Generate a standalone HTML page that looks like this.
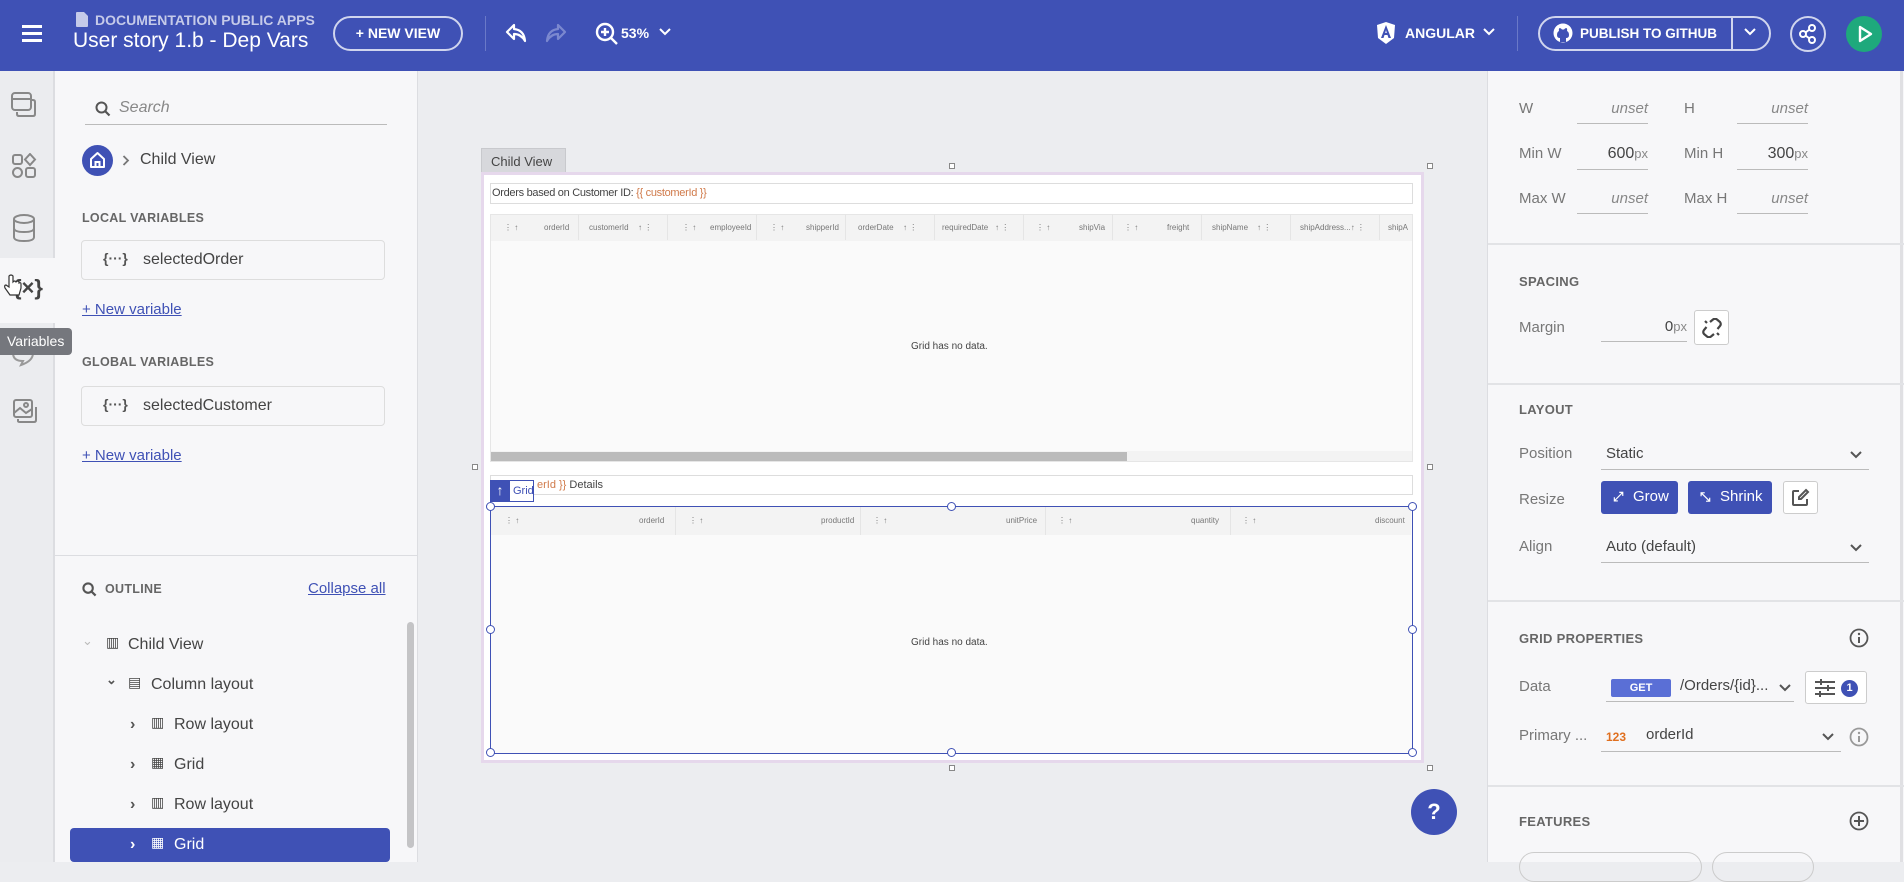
<!DOCTYPE html>
<html><head><meta charset="utf-8">
<style>
*{box-sizing:border-box;margin:0;padding:0}
body{width:1904px;height:862px;overflow:hidden;position:relative;font-family:"Liberation Sans",sans-serif;background:#ecedf0;color:#333}
.a{position:absolute}
.hdr{left:0;top:0;width:1904px;height:71px;background:#3f51b5;color:#fff}
.rail{left:0;top:71px;width:55px;height:791px;background:#ebecef;border-right:2px solid #dcdde1}
.lp{left:55px;top:71px;width:363px;height:791px;background:#f7f7f9;border-right:1px solid #dcdde1}
.rp{left:1487px;top:71px;width:417px;height:791px;background:#f7f7f9;border-left:1px solid #dcdde1}
.sec{font-size:13px;font-weight:bold;color:#666;letter-spacing:.3px}
.lbl{font-size:15px;color:#777}
.ul{border-bottom:1px solid #bbb}
.varbox{position:absolute;left:81px;width:304px;height:40px;border:1px solid #ddd;border-radius:4px;background:#f7f7f9;font-size:16px;color:#444;padding:10px 0 0 61px}
.link{font-size:15px;color:#3f51b5;text-decoration:underline}
.tree{position:absolute;font-size:16px;color:#444}
.cv{font-family:"Liberation Sans",sans-serif}
.gh{position:absolute;font-size:8px;color:#777;top:9px}
.hdl{position:absolute;width:9px;height:9px;border:1.3px solid #3f51b5;border-radius:50%;background:#fff}
.sq{position:absolute;width:6px;height:6px;border:1px solid #888;background:#fff}
.div{position:absolute;left:0;width:417px;border-top:2px solid #e2e3e6}
</style></head><body>
<div class="a hdr">
 <div class="a" style="left:22px;top:25px;width:20px;height:3px;background:#fff;box-shadow:0 7px 0 #fff,0 14px 0 #fff"></div>
 <svg class="a" style="left:76px;top:12px" width="12" height="15" viewBox="0 0 12 15"><path d="M0 1Q0 0 1 0H8L12 4V14Q12 15 11 15H1Q0 15 0 14Z" fill="#c5cae9"/></svg>
 <div class="a" style="left:95px;top:12px;font-size:14px;font-weight:bold;color:#c5cae9">DOCUMENTATION PUBLIC APPS</div>
 <div class="a" style="left:73px;top:29px;font-size:21px;color:#fff">User story 1.b - Dep Vars</div>
 <div class="a" style="left:333px;top:16px;width:130px;height:35px;border:2px solid #d0d5ee;border-radius:18px;font-size:14px;font-weight:bold;text-align:center;line-height:31px">+ NEW VIEW</div>
 <div class="a" style="left:485px;top:16px;width:1px;height:35px;background:#6a79c8"></div>
 <svg class="a" style="left:505px;top:22px" width="22" height="22" viewBox="0 0 22 22"><path d="M9 3L2 10L9 17V12Q16 12 20 19Q19 8 9 7Z" fill="none" stroke="#fff" stroke-width="2.2" stroke-linejoin="round"/></svg>
 <svg class="a" style="left:545px;top:22px" width="22" height="22" viewBox="0 0 22 22"><path d="M13 3L20 10L13 17V12Q6 12 2 19Q3 8 13 7Z" fill="none" stroke="#7b88cf" stroke-width="2.2" stroke-linejoin="round"/></svg>
 <svg class="a" style="left:595px;top:22px" width="24" height="24" viewBox="0 0 24 24"><circle cx="10" cy="10" r="8" fill="none" stroke="#fff" stroke-width="2.4"/><path d="M16 16L22 22M10 6V14M6 10H14" stroke="#fff" stroke-width="2.4"/></svg>
 <div class="a" style="left:621px;top:25px;font-size:14px;font-weight:bold">53%</div>
 <svg class="a" style="left:659px;top:28px" width="12" height="8"><path d="M1 1L6 6L11 1" fill="none" stroke="#fff" stroke-width="2"/></svg>
 <svg class="a" style="left:1377px;top:22px" width="18" height="22" viewBox="0 0 18 22"><path d="M9 0L18 3L17 16L9 22L1 16L0 3Z" fill="#fff"/><path d="M9 3L4 16H6.5L7.5 13H10.5L11.5 16H14ZM8.2 11L9 8L9.8 11Z" fill="#3f51b5"/></svg>
 <div class="a" style="left:1405px;top:25px;font-size:14px;font-weight:bold">ANGULAR</div>
 <svg class="a" style="left:1483px;top:28px" width="12" height="8"><path d="M1 1L6 6L11 1" fill="none" stroke="#fff" stroke-width="2"/></svg>
 <div class="a" style="left:1517px;top:16px;width:1px;height:35px;background:#6a79c8"></div>
 <div class="a" style="left:1538px;top:16px;width:233px;height:35px;border:2px solid #d0d5ee;border-radius:18px"></div>
 <div class="a" style="left:1731px;top:18px;width:2px;height:31px;background:#d0d5ee"></div>
 <svg class="a" style="left:1553px;top:23px" width="20" height="20" viewBox="0 0 20 20"><circle cx="10" cy="10" r="9.5" fill="#fff"/><path d="M7 19V15Q4 15 4 12Q4 9 6 8Q5.5 6 6.5 5Q8 5 9 6.5H11Q12 5 13.5 5Q14.5 6 14 8Q16 9 16 12Q16 15 13 15V19Z" fill="#3f51b5"/></svg>
 <div class="a" style="left:1580px;top:26px;font-size:13.5px;font-weight:bold">PUBLISH TO GITHUB</div>
 <svg class="a" style="left:1744px;top:28px" width="12" height="8"><path d="M1 1L6 6L11 1" fill="none" stroke="#fff" stroke-width="2"/></svg>
 <div class="a" style="left:1790px;top:16px;width:36px;height:36px;border:2px solid #d0d5ee;border-radius:50%"></div>
 <svg class="a" style="left:1798px;top:24px" width="20" height="20" viewBox="0 0 20 20"><circle cx="5" cy="10" r="3" fill="none" stroke="#fff" stroke-width="2"/><circle cx="14" cy="4" r="3" fill="none" stroke="#fff" stroke-width="2"/><circle cx="14" cy="16" r="3" fill="none" stroke="#fff" stroke-width="2"/><path d="M7.5 8.5L11.5 5.5M7.5 11.5L11.5 14.5" stroke="#fff" stroke-width="2"/></svg>
 <div class="a" style="left:1846px;top:16px;width:36px;height:36px;background:#1ea97c;border-radius:50%"></div>
 <svg class="a" style="left:1857px;top:25px" width="16" height="18"><path d="M3 2L14 9L3 16Z" fill="none" stroke="#fff" stroke-width="2.4" stroke-linejoin="round"/></svg>
</div>
<div class="a rail">
 <div class="a" style="left:0;top:187px;width:55px;height:65px;background:#f7f7f9"></div>
 <svg class="a" style="left:10px;top:20px" width="28" height="28" viewBox="0 0 28 28" fill="none" stroke="#888" stroke-width="2"><rect x="2" y="2" width="19" height="17" rx="3"/><path d="M2 8H21"/><path d="M7 21V23Q7 25 9 25H23Q25 25 25 23V11Q25 9 23 9H21"/></svg>
 <svg class="a" style="left:11px;top:82px" width="26" height="26" viewBox="0 0 26 26" fill="none" stroke="#888" stroke-width="2"><rect x="2" y="2" width="9" height="9" rx="2"/><path d="M19 1L24 6.5L19 12L14 6.5Z"/><circle cx="6.5" cy="19.5" r="4.5"/><rect x="15" y="15" width="9" height="9" rx="2"/></svg>
 <svg class="a" style="left:12px;top:143px" width="24" height="28" viewBox="0 0 24 28" fill="none" stroke="#888" stroke-width="2"><ellipse cx="12" cy="5" rx="10" ry="4"/><path d="M2 5V23Q2 27 12 27Q22 27 22 23V5M2 14Q2 18 12 18Q22 18 22 14"/></svg>
 <div class="a" style="left:13px;top:204px;font-size:22px;font-weight:bold;color:#444">{×}</div>
 <svg class="a" style="left:3px;top:203px" width="20" height="24" viewBox="0 0 20 24"><path d="M6 2V13L3 11Q1 11 2 14L7 21H16L18 14V10Q18 8 16 9V8Q15 6 13 8Q12 6 10 8V2Q8 0 6 2Z" fill="#fff" stroke="#333" stroke-width="1.2"/></svg>
 <svg class="a" style="left:12px;top:327px" width="26" height="26" viewBox="0 0 26 26" fill="none" stroke="#888" stroke-width="2"><rect x="2" y="2" width="18" height="17" rx="2"/><path d="M2 15L8 10L14 15L20 11"/><circle cx="14" cy="7" r="2"/><path d="M6 21V23Q6 24 8 24H22Q24 24 24 22V9"/></svg>
 <svg class="a" style="left:10px;top:270px" width="26" height="26" viewBox="0 0 26 26" fill="none" stroke="#999" stroke-width="2"><path d="M13 3Q3 3 3 12Q3 20 13 20L11 24Q23 20 23 12Q23 3 13 3Z"/></svg>
</div>
<div class="a lp"></div>
<svg class="a" style="left:95px;top:101px" width="16" height="16" viewBox="0 0 16 16"><circle cx="6.5" cy="6.5" r="5" fill="none" stroke="#555" stroke-width="2"/><path d="M10 10L14.5 14.5" stroke="#555" stroke-width="2.2"/></svg>
<div class="a" style="left:119px;top:99px;font-size:16px;font-style:italic;color:#888">Search</div>
<div class="a ul" style="left:85px;top:124px;width:302px"></div>
<div class="a" style="left:82px;top:145px;width:31px;height:31px;border-radius:50%;background:#3f51b5"></div>
<svg class="a" style="left:89px;top:151px" width="17" height="18" viewBox="0 0 17 18"><path d="M2 8L8.5 2L15 8V16H2Z" fill="none" stroke="#fff" stroke-width="2" stroke-linejoin="round"/><path d="M6.5 16V11H10.5V16" stroke="#fff" stroke-width="2" fill="none"/></svg>
<svg class="a" style="left:122px;top:155px" width="8" height="11"><path d="M1.5 1L6 5.5L1.5 10" fill="none" stroke="#777" stroke-width="1.8"/></svg>
<div class="a" style="left:140px;top:151px;font-size:16px;color:#444">Child View</div>
<div class="a sec" style="left:82px;top:211px;font-size:12.5px">LOCAL VARIABLES</div>
<div class="varbox" style="top:240px">selectedOrder</div>
<div class="a" style="left:103px;top:250px;font-size:14px;font-weight:bold;color:#555">{···}</div>
<div class="a link" style="left:82px;top:301px">+ New variable</div>
<div class="a sec" style="left:82px;top:355px;font-size:12.5px">GLOBAL VARIABLES</div>
<div class="varbox" style="top:386px">selectedCustomer</div>
<div class="a" style="left:103px;top:396px;font-size:14px;font-weight:bold;color:#555">{···}</div>
<div class="a link" style="left:82px;top:447px">+ New variable</div>
<div class="a" style="left:55px;top:555px;width:362px;border-top:1px solid #dcdde1"></div>
<svg class="a" style="left:82px;top:582px" width="15" height="15" viewBox="0 0 16 16"><circle cx="6.5" cy="6.5" r="5" fill="none" stroke="#555" stroke-width="2.2"/><path d="M10 10L14.5 14.5" stroke="#555" stroke-width="2.4"/></svg>
<div class="a sec" style="left:105px;top:582px;font-size:12.5px">OUTLINE</div>
<div class="a link" style="left:308px;top:580px;font-size:15px">Collapse all</div>
<div class="a" style="left:407px;top:622px;width:7px;height:226px;background:#c4c4c6;border-radius:4px"></div>
<div class="a" style="left:70px;top:828px;width:320px;height:34px;background:#3f51b5;border-radius:4px"></div>
<div class="tree" style="left:82px;top:633px;color:#bbb;font-size:13px">⌄</div>
<div class="tree" style="left:106px;top:634px;font-size:14px;letter-spacing:-1px">▥</div><div class="tree" style="left:128px;top:636px">Child View</div>
<div class="tree" style="left:106px;top:672px;font-size:13px;font-weight:bold;color:#555">⌄</div>
<div class="tree" style="left:128px;top:674px;font-size:14px">▤</div><div class="tree" style="left:151px;top:676px">Column layout</div>
<div class="tree" style="left:130px;top:716px;font-weight:bold;color:#555">›</div><div class="tree" style="left:151px;top:714px;font-size:14px">▥</div><div class="tree" style="left:174px;top:716px">Row layout</div>
<div class="tree" style="left:130px;top:756px;font-weight:bold;color:#555">›</div><div class="tree" style="left:151px;top:754px;font-size:14px">▦</div><div class="tree" style="left:174px;top:756px">Grid</div>
<div class="tree" style="left:130px;top:796px;font-weight:bold;color:#555">›</div><div class="tree" style="left:151px;top:794px;font-size:14px">▥</div><div class="tree" style="left:174px;top:796px">Row layout</div>
<div class="tree" style="left:130px;top:836px;font-weight:bold;color:#fff">›</div><div class="tree" style="left:151px;top:834px;font-size:14px;color:#fff">▦</div><div class="tree" style="left:174px;top:836px;color:#fff">Grid</div>
<div class="a" style="left:0;top:328px;height:27px;background:#75777d;border-radius:0 4px 4px 0;color:#fff;font-size:14px;padding:5px 8px 0 7px;white-space:nowrap">Variables</div>
<div class="a" style="left:481px;top:148px;width:85px;height:25px;background:#d7d8dc;border:1px solid #c8c9cd;font-size:13px;color:#444;padding:5px 0 0 9px">Child View</div>
<div class="a" style="left:481px;top:172px;width:943px;height:591px;border:3px solid #e6d8ec;background:#fff"></div>
<div class="sq" style="left:949px;top:163px"></div><div class="sq" style="left:1427px;top:163px"></div>
<div class="sq" style="left:472px;top:464px"></div><div class="sq" style="left:1427px;top:464px"></div>
<div class="sq" style="left:949px;top:765px"></div><div class="sq" style="left:1427px;top:765px"></div>
<div class="a cv" style="left:490px;top:183px;width:923px;height:21px;border:1px solid #ddd;font-size:11px;color:#444;padding:3px 0 0 1px;letter-spacing:-.3px">Orders based on Customer ID: <span style="color:#d07a4a">{{ customerId }}</span></div>
<div class="a" style="left:490px;top:214px;width:923px;height:248px;background:#fafafa;border:1px solid #e6e6e6;overflow:hidden">
 <div class="a" style="left:0;top:0;width:923px;height:26px;background:#f3f3f3"></div>
 <div class="a" style="left:420px;top:126px;font-size:10px;color:#444">Grid has no data.</div>
 <div class="a" style="left:0;top:236px;width:923px;height:11px;background:#f3f3f3"></div>
 <div class="a" style="left:0;top:237px;width:636px;height:10px;background:#bbb"></div>
</div>
<div class="a" style="left:490px;top:214px;width:923px;height:26px;overflow:hidden">
 <div class="gh" style="left:14px">⋮ ↑</div><div class="gh" style="left:54px">orderId</div>
 <div class="gh" style="left:99px">customerId</div><div class="gh" style="left:148px">↑ ⋮</div>
 <div class="gh" style="left:192px">⋮ ↑</div><div class="gh" style="left:220px">employeeId</div>
 <div class="gh" style="left:280px">⋮ ↑</div><div class="gh" style="left:316px">shipperId</div>
 <div class="gh" style="left:368px">orderDate</div><div class="gh" style="left:413px">↑ ⋮</div>
 <div class="gh" style="left:452px">requiredDate</div><div class="gh" style="left:505px">↑ ⋮</div>
 <div class="gh" style="left:546px">⋮ ↑</div><div class="gh" style="left:589px">shipVia</div>
 <div class="gh" style="left:634px">⋮ ↑</div><div class="gh" style="left:677px">freight</div>
 <div class="gh" style="left:722px">shipName</div><div class="gh" style="left:767px">↑ ⋮</div>
 <div class="gh" style="left:810px">shipAddress...↑ ⋮</div>
 <div class="gh" style="left:898px">shipA</div>
 <div class="a" style="left:88px;top:0;width:1px;height:26px;background:#e5e5e5;box-shadow:89px 0 #e5e5e5,178px 0 #e5e5e5,267px 0 #e5e5e5,356px 0 #e5e5e5,445px 0 #e5e5e5,534px 0 #e5e5e5,623px 0 #e5e5e5,712px 0 #e5e5e5,801px 0 #e5e5e5"></div>
</div>
<div class="a cv" style="left:490px;top:475px;width:923px;height:20px;border:1px solid #ddd;font-size:11px;color:#444;padding:3px 0 0 46px"><span style="color:#d07a4a">erId }}</span> Details</div>
<div class="a" style="left:490px;top:506px;width:923px;height:248px;background:#fafafa;border:1.5px solid #3f51b5">
 <div class="a" style="left:0;top:0;width:920px;height:28px;background:#f3f3f3"></div>
 <div class="gh" style="left:14px;top:9px">⋮ ↑</div><div class="gh" style="left:148px;top:9px">orderId</div>
 <div class="gh" style="left:198px;top:9px">⋮ ↑</div><div class="gh" style="left:330px;top:9px">productId</div>
 <div class="gh" style="left:382px;top:9px">⋮ ↑</div><div class="gh" style="left:515px;top:9px">unitPrice</div>
 <div class="gh" style="left:567px;top:9px">⋮ ↑</div><div class="gh" style="left:700px;top:9px">quantity</div>
 <div class="gh" style="left:751px;top:9px">⋮ ↑</div><div class="gh" style="left:884px;top:9px">discount</div>
 <div class="a" style="left:184px;top:0;width:1px;height:28px;background:#e5e5e5;box-shadow:185px 0 #e5e5e5,370px 0 #e5e5e5,555px 0 #e5e5e5"></div>
 <div class="a" style="left:420px;top:130px;font-size:10px;color:#444">Grid has no data.</div>
</div>
<div class="hdl" style="left:486px;top:502px"></div><div class="hdl" style="left:947px;top:502px"></div><div class="hdl" style="left:1408px;top:502px"></div>
<div class="hdl" style="left:486px;top:625px"></div><div class="hdl" style="left:1408px;top:625px"></div>
<div class="hdl" style="left:486px;top:748px"></div><div class="hdl" style="left:947px;top:748px"></div><div class="hdl" style="left:1408px;top:748px"></div>
<div class="a" style="left:490px;top:480px;width:44px;height:22px;border:1px solid #3f51b5;background:#fff;font-size:11px;color:#3f51b5;padding:4px 0 0 22px;white-space:nowrap">Grid</div>
<div class="a" style="left:490px;top:480px;width:20px;height:22px;background:#3f51b5;color:#fff;font-size:14px;font-weight:bold;text-align:center;line-height:20px">↑</div>
<div class="a" style="left:1411px;top:789px;width:46px;height:46px;border-radius:50%;background:#3f51b5;color:#fff;font-size:22px;font-weight:bold;text-align:center;line-height:46px">?</div>
<div class="a rp">
 <div class="a" style="left:412px;top:0;width:3px;height:791px;background:#e0e0e3"></div>
 <div class="a lbl" style="left:31px;top:29px">W</div><div class="a ul" style="left:89px;top:29px;width:71px;text-align:right;font-size:15px;font-style:italic;color:#888;padding-bottom:6px">unset</div>
 <div class="a lbl" style="left:196px;top:29px">H</div><div class="a ul" style="left:249px;top:29px;width:71px;text-align:right;font-size:15px;font-style:italic;color:#888;padding-bottom:6px">unset</div>
 <div class="a lbl" style="left:31px;top:74px">Min W</div><div class="a ul" style="left:89px;top:74px;width:71px;text-align:right;font-size:16px;color:#444;padding-bottom:6px">600<span style="font-size:13px;color:#888">px</span></div>
 <div class="a lbl" style="left:196px;top:74px">Min H</div><div class="a ul" style="left:249px;top:74px;width:71px;text-align:right;font-size:16px;color:#444;padding-bottom:6px">300<span style="font-size:13px;color:#888">px</span></div>
 <div class="a lbl" style="left:31px;top:119px">Max W</div><div class="a ul" style="left:89px;top:119px;width:71px;text-align:right;font-size:15px;font-style:italic;color:#888;padding-bottom:6px">unset</div>
 <div class="a lbl" style="left:196px;top:119px">Max H</div><div class="a ul" style="left:249px;top:119px;width:71px;text-align:right;font-size:15px;font-style:italic;color:#888;padding-bottom:6px">unset</div>
 <div class="div" style="top:172px"></div>
 <div class="a sec" style="left:31px;top:203px">SPACING</div>
 <div class="a lbl" style="left:31px;top:248px">Margin</div>
 <div class="a ul" style="left:113px;top:247px;width:86px;text-align:right;font-size:15px;color:#444;padding-bottom:6px">0<span style="font-size:13px;color:#888">px</span></div>
 <div class="a" style="left:206px;top:239px;width:35px;height:35px;border:1px solid #ccc;border-radius:3px;background:#fff"></div>
 <svg class="a" style="left:214px;top:247px" width="20" height="20" viewBox="0 0 20 20" fill="none" stroke="#444" stroke-width="2.2"><path d="M8 4L11 1.5Q13 0 15 1.5L18 4Q19.5 6 18 8L15.5 11M12 16L9 18.5Q7 20 5 18.5L2 16Q0.5 14 2 12L4.5 9M5 5L3 3M15 15L17 17"/></svg>
 <div class="div" style="top:312px"></div>
 <div class="a sec" style="left:31px;top:331px">LAYOUT</div>
 <div class="a lbl" style="left:31px;top:374px">Position</div>
 <div class="a ul" style="left:113px;top:374px;width:268px;font-size:15px;color:#444;padding:0 0 7px 5px">Static</div>
 <svg class="a" style="left:362px;top:380px" width="12" height="8"><path d="M1 1L6 6L11 1" fill="none" stroke="#555" stroke-width="2"/></svg>
 <div class="a lbl" style="left:31px;top:420px">Resize</div>
 <div class="a" style="left:113px;top:410px;width:77px;height:33px;background:#3f51b5;border-radius:3px;color:#fff;font-size:15px;padding:7px 0 0 32px">Grow</div>
 <div class="a" style="left:125px;top:418px;color:#fff;font-size:13px;font-weight:bold">⤢</div>
 <div class="a" style="left:200px;top:410px;width:84px;height:33px;background:#3f51b5;border-radius:3px;color:#fff;font-size:15px;padding:7px 0 0 32px">Shrink</div>
 <div class="a" style="left:212px;top:418px;color:#fff;font-size:13px;font-weight:bold">⤡</div>
 <div class="a" style="left:295px;top:410px;width:35px;height:33px;border:1px solid #ccc;border-radius:3px;background:#fff"></div>
 <svg class="a" style="left:303px;top:417px" width="19" height="19" viewBox="0 0 19 19" fill="none" stroke="#555" stroke-width="2"><path d="M8 3H3Q2 3 2 4V16Q2 17 3 17H15Q16 17 16 16V11"/><path d="M15 2L17 4L10 11H8V9Z"/></svg>
 <div class="a lbl" style="left:31px;top:467px">Align</div>
 <div class="a ul" style="left:113px;top:467px;width:268px;font-size:15px;color:#444;padding:0 0 7px 5px">Auto (default)</div>
 <svg class="a" style="left:362px;top:473px" width="12" height="8"><path d="M1 1L6 6L11 1" fill="none" stroke="#555" stroke-width="2"/></svg>
 <div class="div" style="top:529px"></div>
 <div class="a sec" style="left:31px;top:560px">GRID PROPERTIES</div>
 <svg class="a" style="left:361px;top:557px" width="20" height="20" viewBox="0 0 20 20"><circle cx="10" cy="10" r="8.5" fill="none" stroke="#555" stroke-width="1.8"/><path d="M10 9V15" stroke="#555" stroke-width="2"/><circle cx="10" cy="6" r="1.2" fill="#555"/></svg>
 <div class="a lbl" style="left:31px;top:607px">Data</div>
 <div class="a ul" style="left:118px;top:601px;width:188px;height:30px"></div>
 <div class="a" style="left:123px;top:608px;width:60px;height:18px;background:#5a6fd6;border-radius:2px;color:#fff;font-size:11px;font-weight:bold;text-align:center;line-height:18px">GET</div>
 <div class="a" style="left:192px;top:606px;font-size:15px;color:#444">/Orders/{id}...</div>
 <svg class="a" style="left:291px;top:613px" width="12" height="8"><path d="M1 1L6 6L11 1" fill="none" stroke="#555" stroke-width="2"/></svg>
 <div class="a" style="left:317px;top:600px;width:62px;height:33px;border:1px solid #ccc;border-radius:3px;background:#fff"></div>
 <svg class="a" style="left:326px;top:608px" width="22" height="18" viewBox="0 0 22 18" stroke="#555" stroke-width="2"><path d="M1 3H21M1 9H21M1 15H21"/><path d="M7 0V6M14 6V12M6 12V18"/></svg>
 <div class="a" style="left:353px;top:609px;width:17px;height:17px;border-radius:50%;background:#3f51b5;color:#fff;font-size:11px;font-weight:bold;text-align:center;line-height:17px">1</div>
 <div class="a lbl" style="left:31px;top:656px">Primary ...</div>
 <div class="a ul" style="left:113px;top:652px;width:240px;height:29px"></div>
 <div class="a" style="left:118px;top:659px;font-size:12px;font-weight:bold;color:#e07020">123</div>
 <div class="a" style="left:158px;top:655px;font-size:15px;color:#444">orderId</div>
 <svg class="a" style="left:334px;top:662px" width="12" height="8"><path d="M1 1L6 6L11 1" fill="none" stroke="#555" stroke-width="2"/></svg>
 <svg class="a" style="left:361px;top:656px" width="20" height="20" viewBox="0 0 20 20"><circle cx="10" cy="10" r="8.5" fill="none" stroke="#999" stroke-width="1.8"/><path d="M10 9V15" stroke="#999" stroke-width="2"/><circle cx="10" cy="6" r="1.2" fill="#999"/></svg>
 <div class="div" style="top:714px"></div>
 <div class="a sec" style="left:31px;top:743px">FEATURES</div>
 <svg class="a" style="left:361px;top:740px" width="20" height="20" viewBox="0 0 20 20"><circle cx="10" cy="10" r="8.5" fill="none" stroke="#555" stroke-width="1.8"/><path d="M10 5V15M5 10H15" stroke="#555" stroke-width="2"/></svg>
 <div class="a" style="left:31px;top:781px;width:183px;height:30px;border:1px solid #ccc;border-radius:15px"></div>
 <div class="a" style="left:224px;top:781px;width:102px;height:30px;border:1px solid #ccc;border-radius:15px"></div>
</div>
</body></html>
